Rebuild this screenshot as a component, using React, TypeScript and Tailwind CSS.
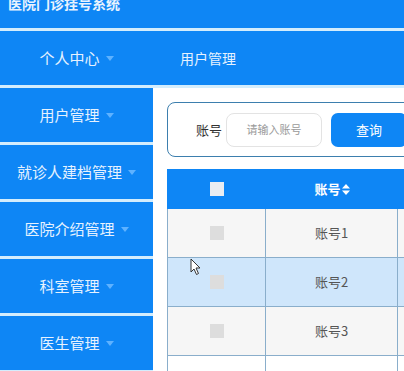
import React from "react";

const font = { fontFamily: '"Noto Sans CJK SC", "Noto Sans", sans-serif' };

function Caret() {
  return (
    <svg width="8" height="5" viewBox="0 0 8 5" className="ml-[6px] mt-[1px]">
      <path d="M0 0 L8 0 L4 5 Z" fill="#5eb2ff" />
    </svg>
  );
}

function SortIcon() {
  return (
    <svg width="8" height="11" viewBox="0 0 8 11" className="ml-[1px]">
      <path d="M0 4.5 L8 4.5 L4 0 Z" fill="#ffffff" />
      <path d="M0 6.5 L8 6.5 L4 11 Z" fill="#ffffff" />
    </svg>
  );
}

function Box({ light }: { light?: boolean }) {
  return (
    <span
      className={
        "block w-[14px] h-[14px] " + (light ? "bg-[#e9edf2]" : "bg-[#dddddd]")
      }
    />
  );
}

const menu = [
  "用户管理",
  "就诊人建档管理",
  "医院介绍管理",
  "科室管理",
  "医生管理",
  "",
];

const rows = [
  { name: "账号1", bg: "bg-[#f6f6f6]" },
  { name: "账号2", bg: "bg-[#cfe6fb]" },
  { name: "账号3", bg: "bg-[#f6f6f6]" },
  { name: "", bg: "bg-white" },
];

export default function App() {
  return (
    <div
      className="relative w-[404px] h-[371px] overflow-hidden bg-[#d3edfd] flex flex-col gap-[3px]"
      style={font}
    >
      {/* title */}
      <div className="h-[28px] shrink-0 bg-[#0e86f5] overflow-hidden">
        <div className="mt-[-7px] pl-[8px] text-[14px] leading-[20px] font-bold text-[#e8f3ff] tracking-[0px]">
          医院门诊挂号系统
        </div>
      </div>

      {/* nav */}
      <div className="h-[54px] shrink-0 bg-[#0e86f5] flex items-center">
        <div className="w-[153px] flex items-center justify-center text-[15px] text-[#e6f2ff]">
          个人中心
          <Caret />
        </div>
        <div className="ml-[27px] text-[14px] text-[#e6f2ff]">用户管理</div>
      </div>

      <div className="flex flex-1 min-h-0">
        {/* sidebar */}
        <div className="w-[153px] shrink-0 flex flex-col gap-[3px]">
          {menu.map((m, i) => (
            <div
              key={i}
              className="h-[54px] shrink-0 bg-[#0e86f5] flex items-center justify-center text-[15px] text-[#e6f2ff]"
            >
              {m && (
                <>
                  {m}
                  <Caret />
                </>
              )}
            </div>
          ))}
        </div>

        {/* main */}
        <div className="w-[600px] shrink-0 bg-white pl-[14px] pt-[14px]">
          <div className="h-[55px] w-[560px] rounded-[8px] border-[1.5px] border-[#3d7fae] bg-white flex items-center pl-[28px]">
            <span className="text-[13px] text-[#333]">账号</span>
            <div className="ml-[4px] w-[96px] h-[34px] rounded-[8px] border border-[#e3e3e3] flex items-center justify-center text-[11px] text-[#9a9a9a]">
              请输入账号
            </div>
            <div className="ml-[9px] w-[76px] h-[34px] rounded-[7px] bg-[#0e86f5] flex items-center justify-center text-[13px] text-white">
              查询
            </div>
          </div>

          <div className="mt-[12px] w-[560px]">
            <div className="h-[40px] bg-[#0e86f5] flex items-center">
              <div className="w-[99px] flex justify-center">
                <Box light />
              </div>
              <div className="w-[132px] flex items-center justify-center text-[13px] font-bold text-white">
                账号
                <SortIcon />
              </div>
            </div>
            {rows.map((r, i) => (
              <div
                key={i}
                className={
                  "h-[49px] flex border-b border-l border-[#8aaecb] " + r.bg
                }
              >
                <div className="w-[98px] flex items-center justify-center border-r border-[#8aaecb]">
                  {r.name && <Box />}
                </div>
                <div className="w-[132px] flex items-center justify-center border-r border-[#8aaecb] text-[13px] text-[#555]">
                  {r.name}
                </div>
                <div className="flex-1" />
              </div>
            ))}
          </div>
        </div>
      </div>

      {/* mouse pointer */}
      <svg
        width="12"
        height="18"
        viewBox="0 0 12 18"
        className="absolute left-[190px] top-[258px]"
      >
        <path
          d="M1 1 L1 14 L4 11 L6.5 16.5 L8.5 15.5 L6 10 L10 10 Z"
          fill="#ffffff"
          stroke="#333"
          strokeWidth="1"
          strokeLinejoin="round"
        />
      </svg>
    </div>
  );
}
